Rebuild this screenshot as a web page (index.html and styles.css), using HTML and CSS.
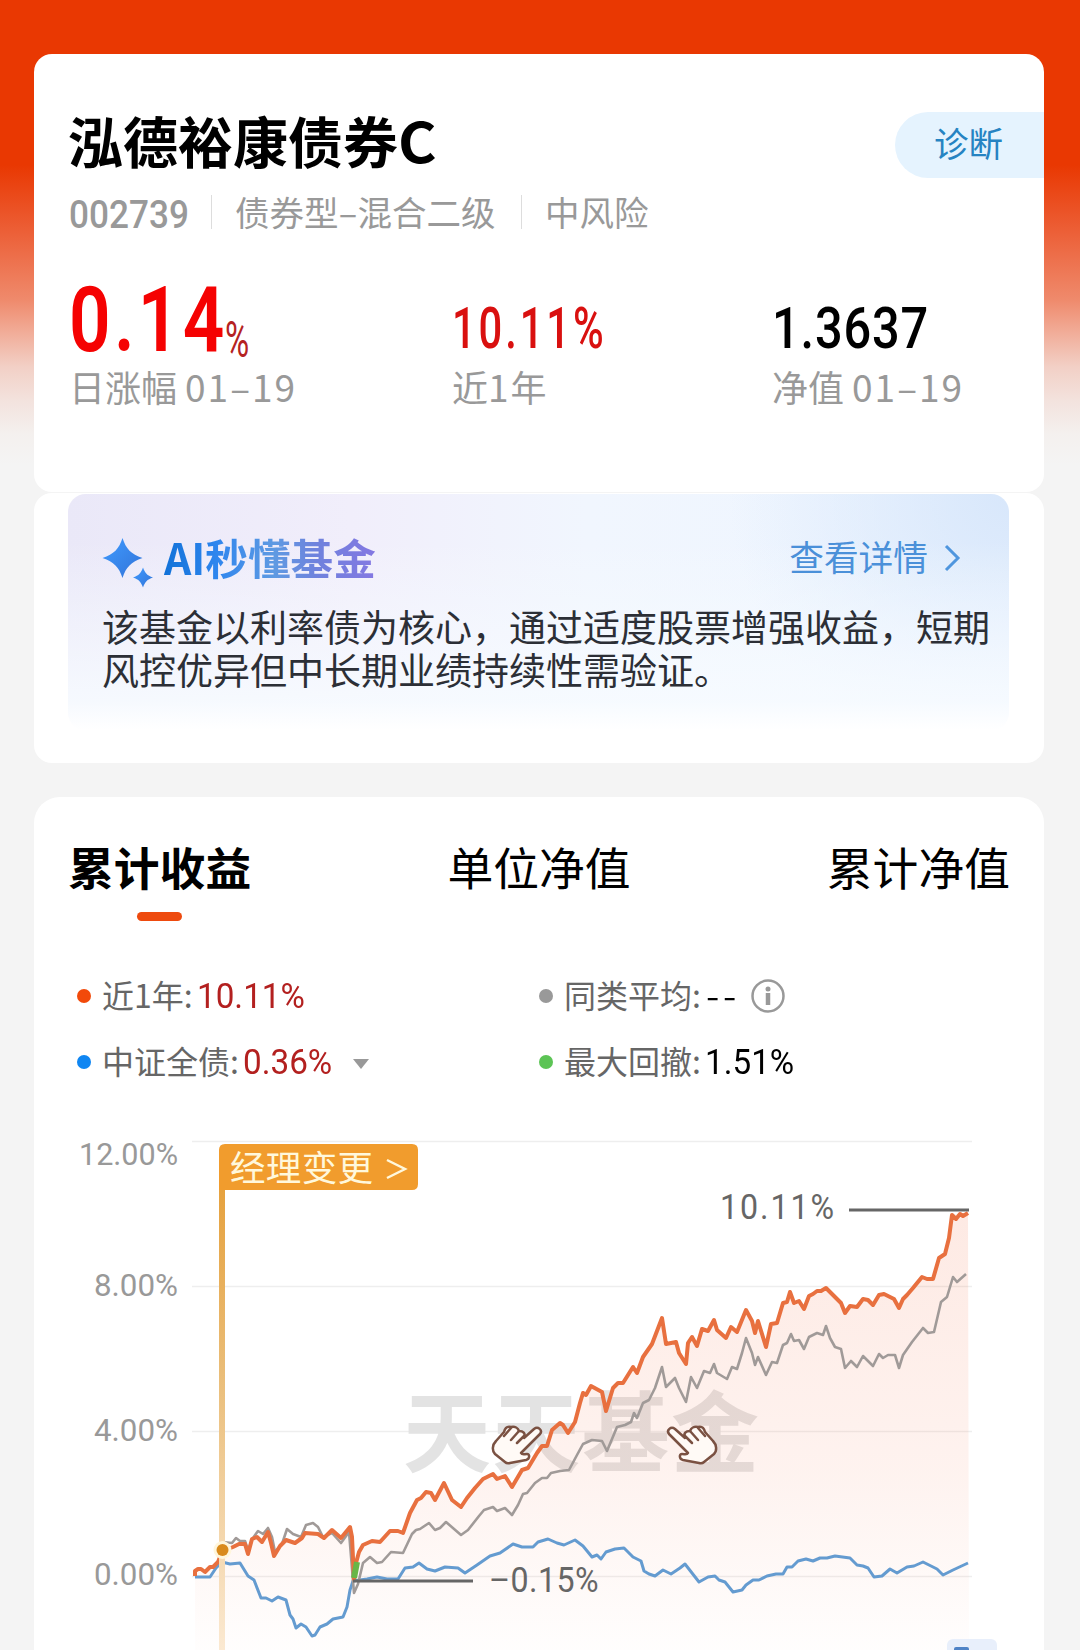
FILE: index.html
```html
<!DOCTYPE html>
<html lang="zh-CN">

<head>
    <meta charset="UTF-8">
    <meta name="viewport" content="width=device-width, initial-scale=1.0">
    <title>泓德裕康债券C</title>
    <link rel="stylesheet" href="styles.css">
</head>

<body>
    <main class="page">
        <section class="card summary">
            <div class="title-row">
                <h1>泓德裕康债券<span>C</span></h1>
                <a class="diagnose">诊断</a>
            </div>
            <div class="meta">
                <span class="code"><b>002739</b></span>
                <span class="type">债券型<i>–</i>混合二级</span>
                <span class="risk">中风险</span>
            </div>
            <div class="metrics">
                <div class="metric day">
                    <div class="value red"><span class="big">0.14</span><span class="unit">%</span></div>
                    <div class="label">日涨幅 <i>01–19</i></div>
                </div>
                <div class="metric year">
                    <div class="value red"><span class="mid">10.11%</span></div>
                    <div class="label">近<i>1</i>年</div>
                </div>
                <div class="metric nav">
                    <div class="value"><span class="net">1.3637</span></div>
                    <div class="label">净值 <i>01–19</i></div>
                </div>
            </div>
        </section>

        <section class="card insight">
            <div class="ai-box">
                <div class="ai-head">
                    <svg class="spark" width="52" height="52" viewBox="0 0 52 52">
                        <defs>
                            <linearGradient id="spark" x1="0" y1="0" x2="1" y2="1">
                                <stop offset="0" stop-color="#3f9bff"/>
                                <stop offset="1" stop-color="#3273d8"/>
                            </linearGradient>
                        </defs>
                        <path fill="url(#spark)" d="M20.500 1C24 12 29 17 40.500 21C29 25 24 30 20.500 41C17 30 12 25 0.500 21C12 17 17 12 20.500 1Z"/>
                        <path fill="url(#spark)" d="M41 30.500C43 36 45 38.500 51 40.500C45 42.500 43 45 41 50.500C39 45 37 42.500 31 40.500C37 38.500 39 36 41 30.500Z"/>
                    </svg>
                    <h2>AI秒懂基金</h2>
                    <a class="more"><span>查看详情</span>
                        <svg width="18" height="28" viewBox="0 0 18 28"><path d="M2 2L14 14L2 26" fill="none" stroke="#4f96de" stroke-width="3"/></svg>
                    </a>
                </div>
                <p>该基金以利率债为核心，通过适度股票增强收益，短期<br>风控优异但中长期业绩持续性需验证。</p>
            </div>
        </section>

        <section class="card trend">
            <nav class="tabs">
                <a class="active">累计收益</a>
                <a>单位净值</a>
                <a>累计净值</a>
            </nav>
            <div class="legend">
                <div class="item"><span class="dot orange"></span><span class="name">近<i>1</i>年:</span><span class="num w105 dark-red">10.11%</span></div>
                <div class="item"><span class="dot gray"></span><span class="name">同类平均:</span><span class="dashes">--</span>
                    <svg class="info" width="34" height="34" viewBox="0 0 34 34">
                        <circle cx="17" cy="17" r="15.500" fill="none" stroke="#999" stroke-width="2.500"/>
                        <circle cx="17" cy="10" r="2.500" fill="#999"/>
                        <path d="M17 14V26" stroke="#999" stroke-width="4.500"/>
                    </svg>
                </div>
                <div class="item"><span class="dot blue"></span><span class="name">中证全债:</span><span class="num w89 dark-red">0.36%</span><span class="caret"></span></div>
                <div class="item"><span class="dot green"></span><span class="name">最大回撤:</span><span class="num w87">1.51%</span></div>
            </div>

            <svg class="chart" width="1010" height="530" viewBox="34 1120 1010 530">
                <defs>
                    <linearGradient id="area" gradientUnits="userSpaceOnUse" x1="0" y1="1210" x2="0" y2="1650">
                        <stop offset="0" stop-color="#f4663a" stop-opacity=".14"/>
                        <stop offset=".6" stop-color="#f4663a" stop-opacity=".08"/>
                        <stop offset="1" stop-color="#f4663a" stop-opacity=".01"/>
                    </linearGradient>
                    <linearGradient id="pole" gradientUnits="userSpaceOnUse" x1="0" y1="1190" x2="0" y2="1650">
                        <stop offset="0" stop-color="#e6a23f"/>
                        <stop offset=".4" stop-color="#eabd78"/>
                        <stop offset="1" stop-color="#fbe9d2"/>
                    </linearGradient>
                    <g id="hand">
                        <path d="M2 9C-1 5 4 1 8 4L18 13C16 8 19 6 23 6C24 3 27 1 31 2C35 1 37 3 38 7L46 16C50 20 50 26 47 29L37 37Q35 39 32 38L16 35C12 34 12 29 15 29C18 29 20 30 21 28Z" fill="#fffaf6" stroke="#7a5142" stroke-width="2.500" stroke-linejoin="round"/>
                        <path d="M18 11L25 18M23 6L31 15M31 3L38 11" fill="none" stroke="#7a5142" stroke-width="2.500" stroke-linecap="round"/>
                    </g>
                </defs>

                <path class="grid" d="M192 1141.500H972M192 1286.500H972M192 1431.500H972M192 1576.500H972"/>
                <g class="axis">
                    <text x="79" y="1165" textLength="99" lengthAdjust="spacingAndGlyphs">12.00%</text>
                    <text x="94" y="1296" textLength="84" lengthAdjust="spacingAndGlyphs">8.00%</text>
                    <text x="94" y="1441" textLength="84" lengthAdjust="spacingAndGlyphs">4.00%</text>
                    <text x="94" y="1585" textLength="84" lengthAdjust="spacingAndGlyphs">0.00%</text>
                </g>
                <text class="watermark" x="403" y="1465" textLength="356">天天基金</text>

                <polygon fill="url(#area)" points="195,1650 195,1574 198,1569 205,1572 213,1567 222,1550 233,1547 245,1543 248,1554 252,1539 257,1537 262,1542 268,1532 274,1556 280,1546 286,1540 295,1543 305,1533 318,1534 324,1538 332,1530 341,1538 350,1527 354,1579 359,1552 363,1545 372,1541 380,1542 390,1531 403,1533 410,1513 417,1500 426,1492 435,1500 444,1483 452,1500 461,1507 473,1489 483,1479 493,1474 505,1476 512,1487 522,1470 528,1468 537,1453 547,1446 552,1430 560,1423 568,1433 575,1422 583,1393 591,1386 602,1392 606,1411 613,1388 623,1383 633,1367 637,1373 643,1357 652,1344 662,1318 666,1344 676,1343 679,1353 686,1364 688,1343 692,1337 697,1346 702,1329 708,1331 714,1320 717,1330 726,1338 731,1327 737,1332 746,1310 755,1333 758,1321 766,1347 771,1324 777,1323 783,1303 787,1302 790,1292 794,1303 799,1301 804,1309 809,1296 817,1291 826,1288 833,1295 841,1303 845,1313 850,1306 857,1307 863,1299 873,1305 879,1295 890,1297 899,1308 907,1295 913,1288 922,1277 933,1279 939,1258 945,1254 949,1238 952,1215 968,1213 969,1650"/>

                <polyline class="line blue-line" points="195,1577 210,1577 216,1568 222,1562 230,1564 240,1563 248,1576 254,1580 261,1598 266,1598 272,1601 278,1597 286,1600 290,1615 293,1619 296,1628 301,1624 306,1627 312,1636 315,1635 320,1627 327,1624 333,1619 343,1617 347,1607 350,1590 353,1581 367,1579 377,1577 387,1579 398,1579 405,1568 413,1567 419,1563 427,1569 435,1571 445,1567 458,1568 465,1573 477,1565 490,1556 500,1553 513,1544 522,1547 533,1547 538,1542 548,1539 557,1543 564,1545 575,1540 583,1546 592,1557 597,1555 601,1559 606,1552 615,1549 624,1548 633,1557 641,1561 644,1571 649,1574 655,1576 663,1570 671,1574 680,1568 685,1564 692,1573 699,1582 708,1577 715,1576 719,1580 725,1582 733,1592 742,1590 746,1585 753,1580 759,1580 767,1576 776,1574 783,1574 787,1567 792,1567 798,1561 806,1559 813,1561 820,1558 827,1558 835,1556 850,1558 857,1565 863,1566 868,1568 874,1577 882,1576 890,1569 897,1573 907,1567 914,1566 923,1562 937,1569 943,1575 953,1570 968,1563"/>
                <polyline class="line gray-line" points="222,1542 232,1543 236,1538 240,1541 245,1541 248,1550 253,1538 258,1531 263,1534 268,1528 272,1537 275,1552 282,1544 287,1529 293,1534 301,1537 306,1525 313,1523 318,1527 323,1537 332,1533 341,1543 349,1532 354,1593 358,1584 363,1563 370,1557 377,1563 382,1562 391,1552 403,1553 412,1534 416,1530 420,1529 429,1523 435,1530 440,1528 446,1522 461,1535 468,1530 479,1516 484,1510 493,1507 497,1511 505,1508 512,1515 518,1505 523,1494 527,1493 535,1483 542,1478 547,1478 551,1473 560,1471 569,1470 577,1455 583,1444 592,1440 602,1441 607,1451 612,1439 617,1427 625,1425 631,1422 634,1413 637,1418 643,1403 649,1400 655,1388 662,1367 666,1387 675,1378 679,1388 686,1402 691,1377 697,1388 704,1371 710,1373 714,1364 717,1373 727,1379 732,1367 737,1369 742,1353 746,1338 752,1353 755,1365 758,1357 766,1375 772,1362 777,1363 783,1345 787,1343 791,1334 794,1341 799,1340 804,1349 809,1337 817,1333 823,1335 826,1326 830,1338 835,1347 841,1349 845,1368 851,1361 857,1367 863,1356 873,1366 879,1354 883,1358 888,1355 895,1355 899,1368 903,1355 912,1342 923,1328 928,1333 934,1332 941,1302 947,1297 953,1277 957,1282 966,1274"/>
                <polyline class="line orange-line" points="195,1576 195,1571 198,1569 201,1569 205,1572 210,1567 213,1567 218,1562 222,1552 228,1549 233,1547 239,1544 245,1544 248,1554 252,1539 257,1537 262,1542 268,1532 271,1543 274,1556 280,1546 286,1540 295,1543 302,1538 305,1533 318,1534 324,1538 332,1530 341,1538 350,1527 352,1537 354,1579 356,1563 359,1552 363,1545 372,1541 380,1542 390,1531 398,1531 403,1533 410,1513 417,1500 421,1498 426,1492 431,1493 435,1500 444,1483 452,1500 461,1507 467,1498 475,1488 483,1479 493,1474 497,1479 505,1476 512,1487 522,1470 528,1468 537,1453 542,1446 547,1446 552,1430 560,1423 563,1425 568,1433 575,1422 580,1403 583,1393 586,1395 591,1386 602,1392 606,1411 613,1388 618,1383 623,1383 633,1367 637,1373 643,1357 652,1344 662,1318 666,1344 676,1342 679,1353 686,1364 688,1343 692,1337 697,1346 702,1329 708,1331 714,1320 717,1330 726,1338 731,1327 737,1332 746,1310 752,1321 755,1333 758,1321 766,1347 771,1324 777,1323 783,1303 787,1302 790,1292 794,1303 799,1301 804,1309 809,1296 813,1294 817,1291 821,1291 826,1288 833,1295 841,1303 845,1313 850,1306 857,1307 863,1299 868,1300 873,1305 879,1295 884,1294 890,1297 894,1299 899,1308 903,1299 907,1295 913,1288 922,1277 927,1279 933,1279 939,1258 945,1254 949,1238 952,1215 956,1219 960,1214 963,1216 968,1213"/>

                <path d="M354 1578L357 1562" stroke="#67b647" stroke-width="6"/>
                <path class="leader" d="M353 1581H473M849 1210H969"/>
                <text class="mark" transform="translate(489 1592) scale(.92 1)" textLength="119">–0.15%</text>
                <text class="mark" transform="translate(720 1219) scale(.92 1)" textLength="124">10.11%</text>

                <use href="#hand" transform="translate(667 1425)"/>
                <use href="#hand" transform="translate(542 1425) scale(-1 1)"/>

                <rect x="219" y="1188" width="6" height="462" fill="url(#pole)"/>
                <path d="M225 1144H412Q418 1144 418 1150V1184Q418 1190 412 1190H219V1150Q219 1144 225 1144Z" fill="#f19c2d"/>
                <text class="flag" x="230" y="1181" textLength="143">经理变更</text>
                <path d="M387 1160L405 1169L387 1178" fill="none" stroke="#fff8dc" stroke-width="2.500"/>
                <circle cx="222.500" cy="1550" r="9" fill="#fff6dc"/>
                <circle cx="222.500" cy="1550" r="6" fill="#d98a1c"/>

                <rect x="947" y="1639" width="50" height="30" rx="6" fill="#e8effb"/>
                <rect x="954" y="1647" width="15" height="10" rx="2" fill="#4f83c6"/>
            </svg>
        </section>
    </main>
</body>

</html>
```
FILE: styles.css
```css
* {
    box-sizing: border-box;
}

body {
    margin: 0;
    height: 1650px;
    overflow: hidden;
    font-family: "Noto Sans CJK SC", sans-serif;
    color: #000;
    background: #f4f4f4 linear-gradient(to bottom, #e93802 0, #e93802 165px, #ec6038 233px, #ef8a6c 300px, #f1ad99 333px, #f2d0c6 367px, #f3e2dd 400px, #f4f0ee 433px, #f4f4f4 465px) no-repeat;
}

h1, h2, p {
    margin: 0;
}

i {
    font-style: normal;
}

.page {
    padding: 54px 36px 0 34px;
}

.card {
    background-color: #fff;
    border-radius: 18px;
}

/* fund summary */
.summary {
    height: 438px;
    padding: 48px 0 0 34px;
    overflow: hidden;
}

.title-row {
    display: flex;
    justify-content: space-between;
    height: 80px;
}

h1 {
    font-size: 55px;
    line-height: 75px;
    font-weight: 700;
}

h1 span {
    display: inline-block;
    transform: scaleX(1.07);
    transform-origin: 0 50%;
}

.diagnose {
    width: 149px;
    height: 66px;
    margin-top: 10px;
    padding-left: 39px;
    border-radius: 33px 0 0 33px;
    background-color: #e5f3fe;
    color: #2683c2;
    font-size: 34.5px;
    line-height: 60px;
}

.meta {
    display: flex;
    align-items: center;
    height: 34px;
    margin-top: 13px;
    padding-left: 1px;
    color: #999;
    font-size: 34.5px;
    line-height: 34px;
    white-space: nowrap;
}

.code {
    width: 142px;
}

.code b {
    display: inline-block;
    font-family: Roboto, sans-serif;
    font-size: 39.5px;
    font-weight: 500;
    transform: translateY(2px) scaleX(.89);
    transform-origin: 0 50%;
}

.type, .risk {
    height: 34px;
    border-left: 1px solid #ddd;
    padding-left: 23px;
    line-height: 32px;
}

.type {
    width: 310px;
}

.type i {
    display: inline-block;
    width: 19px;
    text-align: center;
}

.metrics {
    display: grid;
    grid-template-columns: 383px 320px 1fr;
    margin-top: 44px;
    padding-left: 1px;
}

.value {
    display: flex;
    align-items: baseline;
    height: 90px;
    line-height: 96px;
    font-family: Roboto, sans-serif;
    font-weight: 500;
}

.value span {
    display: block;
    transform-origin: 0 50%;
    white-space: nowrap;
}

.red {
    color: #d9100f;
}

.big {
    width: 156px;
    color: #f50202;
    font-size: 90px;
    font-weight: 600;
    letter-spacing: 4px;
    transform: scaleX(.81);
}

.unit {
    font-size: 50px;
    font-weight: 400;
    color: #b52222;
    transform: translateY(6px) scaleX(.66);
}

.mid, .net {
    font-size: 58px;
    line-height: 112px;
}

.mid {
    letter-spacing: 4px;
    transform: translateY(-1px) scaleX(.72);
}

.net {
    letter-spacing: 1px;
    transform: translateY(-1px) scaleX(.84);
}

.label {
    height: 46px;
    color: #999;
    font-size: 36px;
    line-height: 46px;
    white-space: nowrap;
}

.label i {
    font-size: 37px;
    letter-spacing: 2px;
}

/* AI insight */
.insight {
    height: 270px;
    margin-top: 1px;
    padding: 1px 35px 0 34px;
}

.ai-box {
    height: 236px;
    padding: 35px 0 0 34px;
    border-radius: 18px;
    background:
        linear-gradient(to bottom, rgba(247, 251, 255, 0) 20%, rgba(247, 251, 255, .9) 88%, #fff 100%),
        radial-gradient(circle at 100% 0, #d8e7fb 0, rgba(228, 239, 254, 0) 280px),
        linear-gradient(to right, #eae8f8 0, #f1eefb 30%, #f1f6fe 55%, #edf5ff 100%);
}

.ai-head {
    display: flex;
    align-items: center;
    height: 60px;
}

.spark {
    margin-top: 8px;
}

h2 {
    margin: -4px 0 0 10px;
    font-size: 42.6px;
    line-height: 60px;
    font-weight: 700;
    color: transparent;
    background: linear-gradient(to right, #1272d8 0, #2f86ee 25%, #5f9ae2 52%, #6f82dd 72%, #8478e2 100%);
    -webkit-background-clip: text;
    background-clip: text;
}

.more {
    display: flex;
    align-items: center;
    gap: 16px;
    margin: -2px 0 0 auto;
    padding-right: 47px;
    color: #4a90d9;
    font-size: 34.7px;
    height: 56px;
}

.more span {
    margin-top: -5px;
}

.ai-box p {
    margin-top: 16px;
    color: #2c2f36;
    font-size: 37px;
    line-height: 43px;
    white-space: nowrap;
}

/* trend */
.trend {
    height: 880px;
    margin-top: 34px;
    padding-top: 34px;
    border-radius: 26px;
}

.tabs {
    display: flex;
    justify-content: space-between;
    padding: 0 34px;
    font-size: 45.8px;
    line-height: 71px;
    height: 90px;
}

.active {
    font-weight: 700;
}

.active::after {
    content: "";
    display: block;
    width: 45px;
    height: 9px;
    margin: 10px auto 0;
    border-radius: 5px;
    background-color: #ee4a0e;
}

.legend {
    display: grid;
    grid-template-columns: 462px 1fr;
    grid-auto-rows: 66px;
    padding: 42px 0 0 43px;
    height: 199px;
    color: #666;
    font-size: 32px;
}

.item {
    display: flex;
    align-items: center;
    white-space: nowrap;
}

.name {
    margin-top: -4px;
}

.dot {
    width: 14px;
    height: 14px;
    margin-right: 11px;
    border-radius: 50%;
}

.orange {
    background-color: #f24a0a;
}

.gray {
    background-color: #999;
}

.blue {
    background-color: #0f86f2;
}

.green {
    background-color: #5cc455;
}

.num {
    margin-left: 4px;
    font-family: Roboto, sans-serif;
    font-size: 35px;
    color: #000;
    transform-origin: 0 50%;
}

.dark-red {
    color: #b3201f;
}

.w105 {
    transform: scaleX(.95);
}

.w89 {
    width: 89px;
    transform: scaleX(.95);
}

.w87 {
    transform: scaleX(.95);
}

.dashes {
    margin: -4px 0 0 5px;
    color: #000;
    letter-spacing: 3px;
    transform: scaleX(1.2);
    transform-origin: 0 50%;
}

.info {
    margin-left: 17px;
}

.caret {
    margin: 4px 0 0 21px;
    border: 8px solid transparent;
    border-top: 10px solid #999;
    border-bottom: 0;
}

/* chart */
.chart {
    display: block;
}

.grid {
    fill: none;
    stroke: #eee;
    stroke-width: 1.5;
}

.axis {
    font-family: Roboto, sans-serif;
    font-size: 32px;
    fill: #999;
}

.mark {
    font-family: Roboto, sans-serif;
    font-size: 35px;
    fill: #666;
}

.watermark {
    font-size: 88px;
    font-weight: 700;
    fill: #e3e3e3;
}

.line {
    fill: none;
    stroke-linejoin: round;
}

.orange-line {
    stroke: #e8703f;
    stroke-width: 4;
}

.gray-line {
    stroke: #a09a98;
    stroke-width: 2.6;
}

.blue-line {
    stroke: #649bd0;
    stroke-width: 3;
}

.leader {
    stroke: #666;
    stroke-width: 3;
}

.flag {
    font-size: 35.5px;
    fill: #fff8dc;
}
```
